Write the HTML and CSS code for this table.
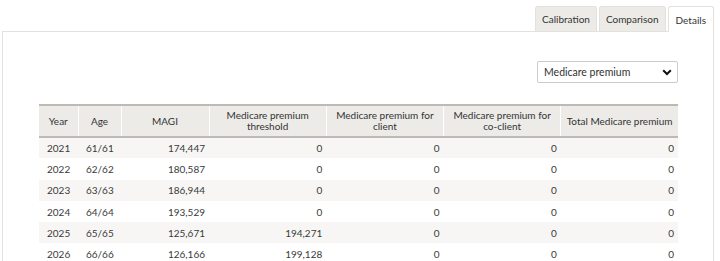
FILE: index.html
```html
<!DOCTYPE html>
<html>
<head>
<meta charset="utf-8">
<link rel="stylesheet" href="styles.css">
</head>
<body>
<div class="tabs">
  <div class="tab">Calibration</div>
  <div class="tab">Comparison</div>
  <div class="tab active">Details</div>
</div>
<div class="panel">
  <div class="toolbar">
    <div class="select">
      <span>Medicare premium</span>
      <svg width="10" height="7" viewBox="0 0 10 7"><path d="M1.2 1.3 L5 5 L8.8 1.3" fill="none" stroke="#111" stroke-width="2"/></svg>
    </div>
  </div>
  <table class="grid">
    <thead>
      <tr>
        <th class="c-year">Year</th>
        <th class="c-age">Age</th>
        <th class="c-magi">MAGI</th>
        <th class="c-num">Medicare premium<br>threshold</th>
        <th class="c-num">Medicare premium for<br>client</th>
        <th class="c-num">Medicare premium for<br>co-client</th>
        <th class="c-num">Total Medicare premium</th>
      </tr>
    </thead>
    <tbody>
      <tr><td>2021</td><td>61/61</td><td class="r">174,447</td><td class="r">0</td><td class="r">0</td><td class="r">0</td><td class="r">0</td></tr>
      <tr><td>2022</td><td>62/62</td><td class="r">180,587</td><td class="r">0</td><td class="r">0</td><td class="r">0</td><td class="r">0</td></tr>
      <tr><td>2023</td><td>63/63</td><td class="r">186,944</td><td class="r">0</td><td class="r">0</td><td class="r">0</td><td class="r">0</td></tr>
      <tr><td>2024</td><td>64/64</td><td class="r">193,529</td><td class="r">0</td><td class="r">0</td><td class="r">0</td><td class="r">0</td></tr>
      <tr><td>2025</td><td>65/65</td><td class="r">125,671</td><td class="r">194,271</td><td class="r">0</td><td class="r">0</td><td class="r">0</td></tr>
      <tr><td>2026</td><td>66/66</td><td class="r">126,166</td><td class="r">199,128</td><td class="r">0</td><td class="r">0</td><td class="r">0</td></tr>
    </tbody>
  </table>
</div>
</body>
</html>
```
FILE: styles.css
```css
* { box-sizing: border-box; }
html, body { margin: 0; padding: 0; background: #fff; }
body {
  font-family: Lato, "Open Sans", sans-serif;
  font-size: 10px;
  color: #3a3a3a;
  padding: 6px 6px 0 2px;
  overflow: hidden;
}
.tabs {
  display: flex;
  justify-content: flex-end;
  gap: 2px;
  height: 25px;
}
.tab {
  height: 25px;
  padding: 0 6px;
  display: flex;
  align-items: center;
  background: #edebe7;
  border: 1px solid #e4e1dc;
  border-bottom: none;
  border-radius: 3px 3px 0 0;
  color: #333;
}
.tab.active {
  background: #fff;
  height: 26px;
  margin-bottom: -1px;
  padding: 0 7px;
  position: relative;
  z-index: 1;
}
.panel {
  border: 1px solid #e4e1dc;
  border-bottom: none;
  height: 240px;
  padding: 29px 35px 0 36px;
}
.toolbar {
  display: flex;
  justify-content: flex-end;
  margin-bottom: 21px;
}
.select {
  width: 141px;
  height: 22px;
  border: 1px solid #ccc;
  border-radius: 2px;
  display: flex;
  align-items: center;
  justify-content: space-between;
  padding: 0 5px 0 6px;
  font-size: 10.5px;
  color: #333;
}
.grid {
  width: 100%;
  border-collapse: collapse;
  table-layout: fixed;
}
.grid th {
  background: #edebe7;
  font-weight: normal;
  color: #333;
  text-align: center;
  height: 32px;
  border-top: 2px solid #bdbab5;
  border-bottom: 2px solid #bdbab5;
  border-left: 1px solid #fff;
  line-height: 11px;
  padding: 0 2px;
  white-space: nowrap;
}
.grid th:first-child { border-left: none; }
.grid .c-year { width: 39px; }
.grid .c-age { width: 43px; }
.grid .c-magi { width: 88px; }
.grid td {
  height: 21.3px;
  padding: 0 4px 0 8px;
  white-space: nowrap;
}
.grid td.r { text-align: right; }
.grid tbody tr:nth-child(odd) td { background: #f7f6f4; }
```
